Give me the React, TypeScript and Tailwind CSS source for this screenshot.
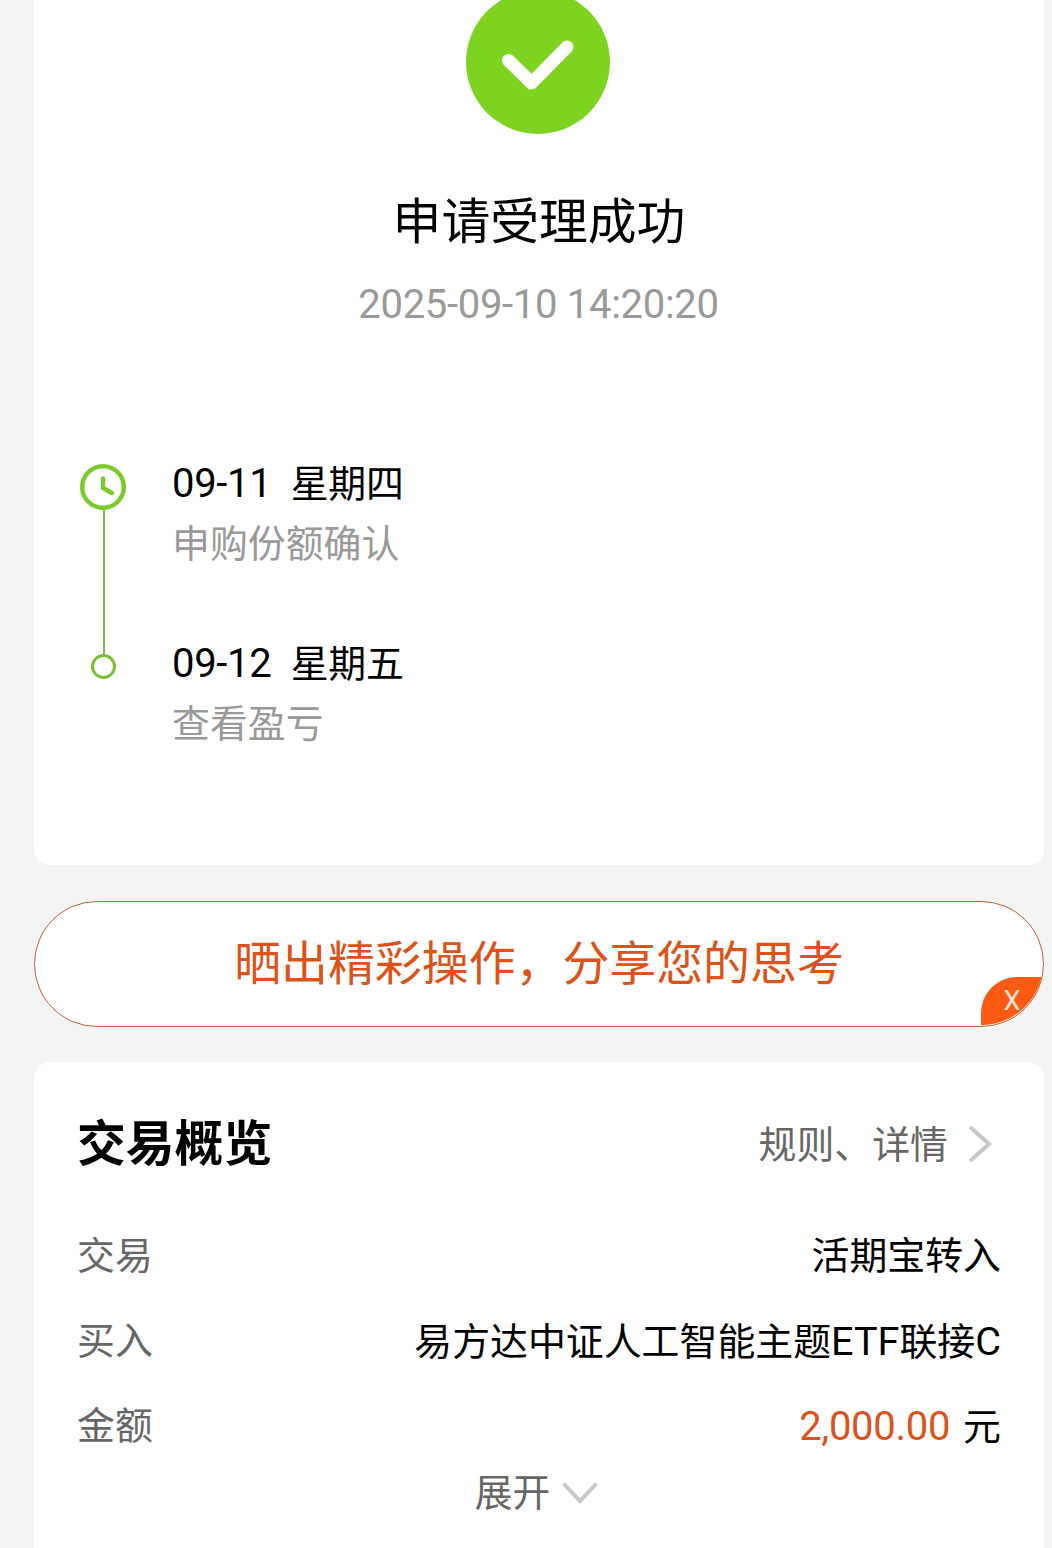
import type { ReactNode } from "react";

type Step = {
  date: string;
  weekday: string;
  note: string;
};

const steps: Step[] = [
  { date: "09-11", weekday: "星期四", note: "申购份额确认" },
  { date: "09-12", weekday: "星期五", note: "查看盈亏" },
];

function SuccessIcon() {
  return (
    <svg className="-mt-[10px] mr-[2px] size-36 shrink-0" viewBox="0 0 144 144" fill="none">
      <circle cx="72" cy="72" r="72" fill="#7ed321" />
      <path
        d="M42.5 70.5 65.500 93 101 57"
        stroke="#fff"
        strokeWidth="13"
        strokeLinecap="round"
        strokeLinejoin="round"
      />
    </svg>
  );
}

function ClockIcon() {
  return (
    <svg className="size-[46px] shrink-0" viewBox="0 0 46 46" fill="none" stroke="#7acb2a">
      <circle cx="23" cy="23" r="20.800" strokeWidth="4.400" />
      <path d="M23 14.500V24l9 5" strokeWidth="4.400" strokeLinecap="round" strokeLinejoin="round" />
    </svg>
  );
}

function Row({ label, children }: { label: string; children: ReactNode }) {
  return (
    <div className="flex h-[85px] items-center justify-between text-[37.9px]">
      <span className="text-[#666]">{label}</span>
      <span className="whitespace-pre text-black">{children}</span>
    </div>
  );
}

function ResultCard() {
  return (
    <section className="flex h-[865px] flex-col items-center rounded-b-2xl bg-white">
      <SuccessIcon />
      <h1 className="mt-[59px] text-[48.8px] leading-[60px] text-black">申请受理成功</h1>
      <p className="mt-7 mr-px text-[40px] leading-[48px] tracking-[-0.3px] text-[#999]">
        2025-09-10 14:20:20
      </p>

      <div className="mt-[125px] flex w-full pl-[46px]">
        <div className="flex w-[46px] flex-col items-center pt-[10px]">
          <ClockIcon />
          <div className="ml-px h-[144px] w-[2px] bg-[#7dbb42]" />
          <div className="ml-px size-[25px] rounded-full border-[3px] border-[#7abf35]" />
        </div>
        <div className="ml-[46px]">
          {steps.map((s) => (
            <div key={s.date} className="h-[180px]">
              <p className="whitespace-pre text-[40px] leading-[60px] tracking-[-0.3px] text-black">
                {s.date + "  "}
                <span className="text-[37.9px]">{s.weekday}</span>
              </p>
              <p className="text-[37.9px] leading-[60px] text-[#999]">{s.note}</p>
            </div>
          ))}
        </div>
      </div>
    </section>
  );
}

function ShareBanner() {
  return (
    <div className="relative mt-9 flex h-[126px] items-center justify-center rounded-full border-[1.5px] border-[#c4602f] bg-white">
      <span className="text-[46.9px] leading-[60px] text-[#dc5218]">
        晒出精彩操作，分享您的思考
      </span>
      <div className="absolute inset-x-0 top-0 bottom-px overflow-hidden rounded-full">
        <button className="absolute right-0 bottom-0 h-[48px] w-[62px] rounded-tl-[36px] bg-[#fb5a12] text-[27px] leading-[48px] text-[#ffe9d6]">
          X
        </button>
      </div>
    </div>
  );
}

function OverviewCard() {
  return (
    <section className="mt-[35px] h-[486px] rounded-t-2xl bg-white pt-[47px] pr-[43px] pl-[43px]">
      <div className="flex h-[72px] items-center justify-between">
        <h2 className="text-[48.8px] font-bold text-black">交易概览</h2>
        <div className="flex items-center pr-[9px] text-[37.9px] text-[#666]">
          规则、详情
          <svg className="mb-[2px] ml-5 h-[38px] w-6" viewBox="0 0 24 38" fill="none">
            <path d="M2 2 21 19 2 36" stroke="#c8c8c8" strokeWidth="4" />
          </svg>
        </div>
      </div>

      <div className="mt-[33px]">
        <Row label="交易">活期宝转入</Row>
        <Row label="买入">
          易方达中证人工智能主题<span className="text-[39.6px]">ETF</span>联接
          <span className="text-[39.6px]">C</span>
        </Row>
        <Row label="金额">
          <span className="text-[40px] tracking-[-0.3px] text-[#d9531e]">2,000.00</span>
          <span className="ml-[13px]">元</span>
        </Row>
      </div>

      <div className="flex h-12 items-center justify-center pr-[5px] text-[37.7px] text-[#666]">
        展开
        <svg className="ml-3 h-[22px] w-9" viewBox="0 0 36 22" fill="none">
          <path d="M1.500 1.500 18 19 34.500 1.500" stroke="#c8c8c8" strokeWidth="4" />
        </svg>
      </div>
    </section>
  );
}

export default function App() {
  return (
    <main
      lang="zh-CN"
      className="h-[1548px] w-[1052px] overflow-hidden bg-[#f4f4f4] pr-2 pl-[34px] font-[Roboto,'Noto_Sans_CJK_SC',sans-serif]"
    >
      <ResultCard />
      <ShareBanner />
      <OverviewCard />
    </main>
  );
}
